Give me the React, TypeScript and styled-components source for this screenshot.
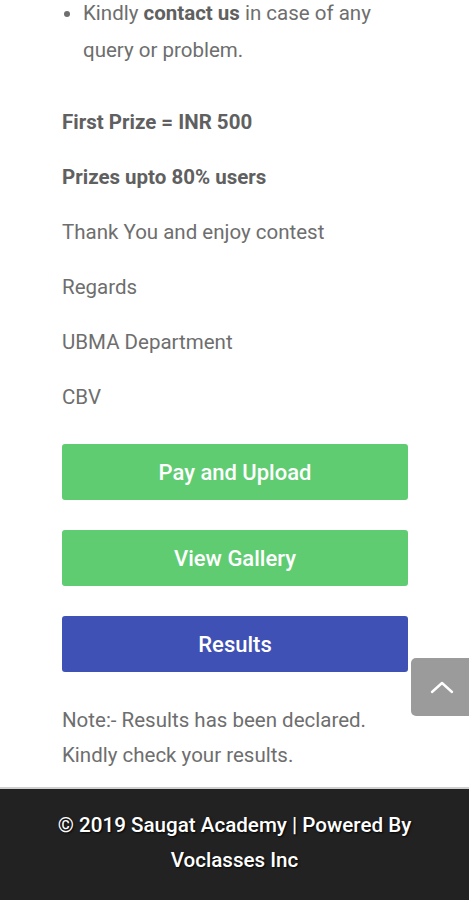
import React, { FC } from 'react'
import styled, { createGlobalStyle } from 'styled-components'

const GlobalStyle = createGlobalStyle`
  html, body {
    margin: 0;
    padding: 0;
    background: #ffffff;
  }
  body {
    font-family: Roboto, 'Liberation Sans', Arial, sans-serif;
    overflow: hidden;
  }
`

const Page = styled.div`
  position: relative;
  width: 469px;
  height: 900px;
  overflow: hidden;
  display: flex;
  flex-direction: column;
`

const Content = styled.div`
  padding: 0 61px 0 62px;
  margin-top: -5px;
  color: #6e6e6e;
  font-size: 20.5px;
  line-height: 37px;
`

const List = styled.ul`
  margin: 0 0 35px 0;
  padding-left: 21px;
  list-style: disc;
`

const Para = styled.p<{ bold?: boolean }>`
  margin: 0 0 18px 0;
  font-weight: ${(props): number => (props.bold ? 700 : 400)};
  color: ${(props): string => (props.bold ? '#606060' : '#6e6e6e')};
`

const Strong = styled.strong`
  font-weight: 700;
  color: #606060;
`

const Buttons = styled.div`
  display: flex;
  flex-direction: column;
  gap: 30px;
  margin-top: 28px;
`

const ActionButton = styled.button<{ variant: 'green' | 'blue' }>`
  height: 56px;
  width: 100%;
  border: none;
  border-radius: 3px;
  background: ${(props): string =>
    props.variant === 'blue' ? '#3f51b5' : '#5fcc72'};
  color: #ffffff;
  font-family: Roboto, 'Liberation Sans', Arial, sans-serif;
  font-size: 22px;
  font-weight: 500;
  cursor: pointer;
`

const Note = styled.p`
  margin: 31px 0 0 0;
  line-height: 35px;
`

const Footer = styled.footer`
  margin-top: 14px;
  flex: 1;
  background: #222222;
  border-top: 2px solid #cfcfcf;
  padding-top: 19px;
  text-align: center;
  color: #ffffff;
  font-size: 20.6px;
  font-weight: 500;
  line-height: 35px;
  text-shadow: 1px 1px 2px rgba(0, 0, 0, 0.9);
`

const FooterText = styled.div`
  width: 370px;
  margin: 0 auto;
`

const ScrollTop = styled.button`
  position: absolute;
  left: 411px;
  top: 658px;
  width: 62px;
  height: 58px;
  border: none;
  border-radius: 5px;
  background: #9b9b9b;
  display: flex;
  align-items: center;
  justify-content: center;
  padding: 0;
`

const App: FC = () => {
  return (
    <Page>
      <GlobalStyle />
      <Content>
        <List>
          <li>
            Kindly <Strong>contact us</Strong> in case of any query or problem.
          </li>
        </List>
        <Para bold>First Prize = INR 500</Para>
        <Para bold>Prizes upto 80% users</Para>
        <Para>Thank You and enjoy contest</Para>
        <Para>Regards</Para>
        <Para>UBMA Department</Para>
        <Para>CBV</Para>
        <Buttons>
          <ActionButton variant="green">Pay and Upload</ActionButton>
          <ActionButton variant="green">View Gallery</ActionButton>
          <ActionButton variant="blue">Results</ActionButton>
        </Buttons>
        <Note>
          Note:- Results has been declared.
          <br />
          Kindly check your results.
        </Note>
      </Content>
      <Footer>
        <FooterText>© 2019 Saugat Academy | Powered By Voclasses Inc</FooterText>
      </Footer>
      <ScrollTop aria-label="Scroll to top">
        <svg width="24" height="14" viewBox="0 0 24 14" fill="none">
          <path
            d="M2 12 L12 3 L22 12"
            stroke="#ffffff"
            strokeWidth="2.4"
            strokeLinecap="round"
            strokeLinejoin="round"
          />
        </svg>
      </ScrollTop>
    </Page>
  )
}

export default App
